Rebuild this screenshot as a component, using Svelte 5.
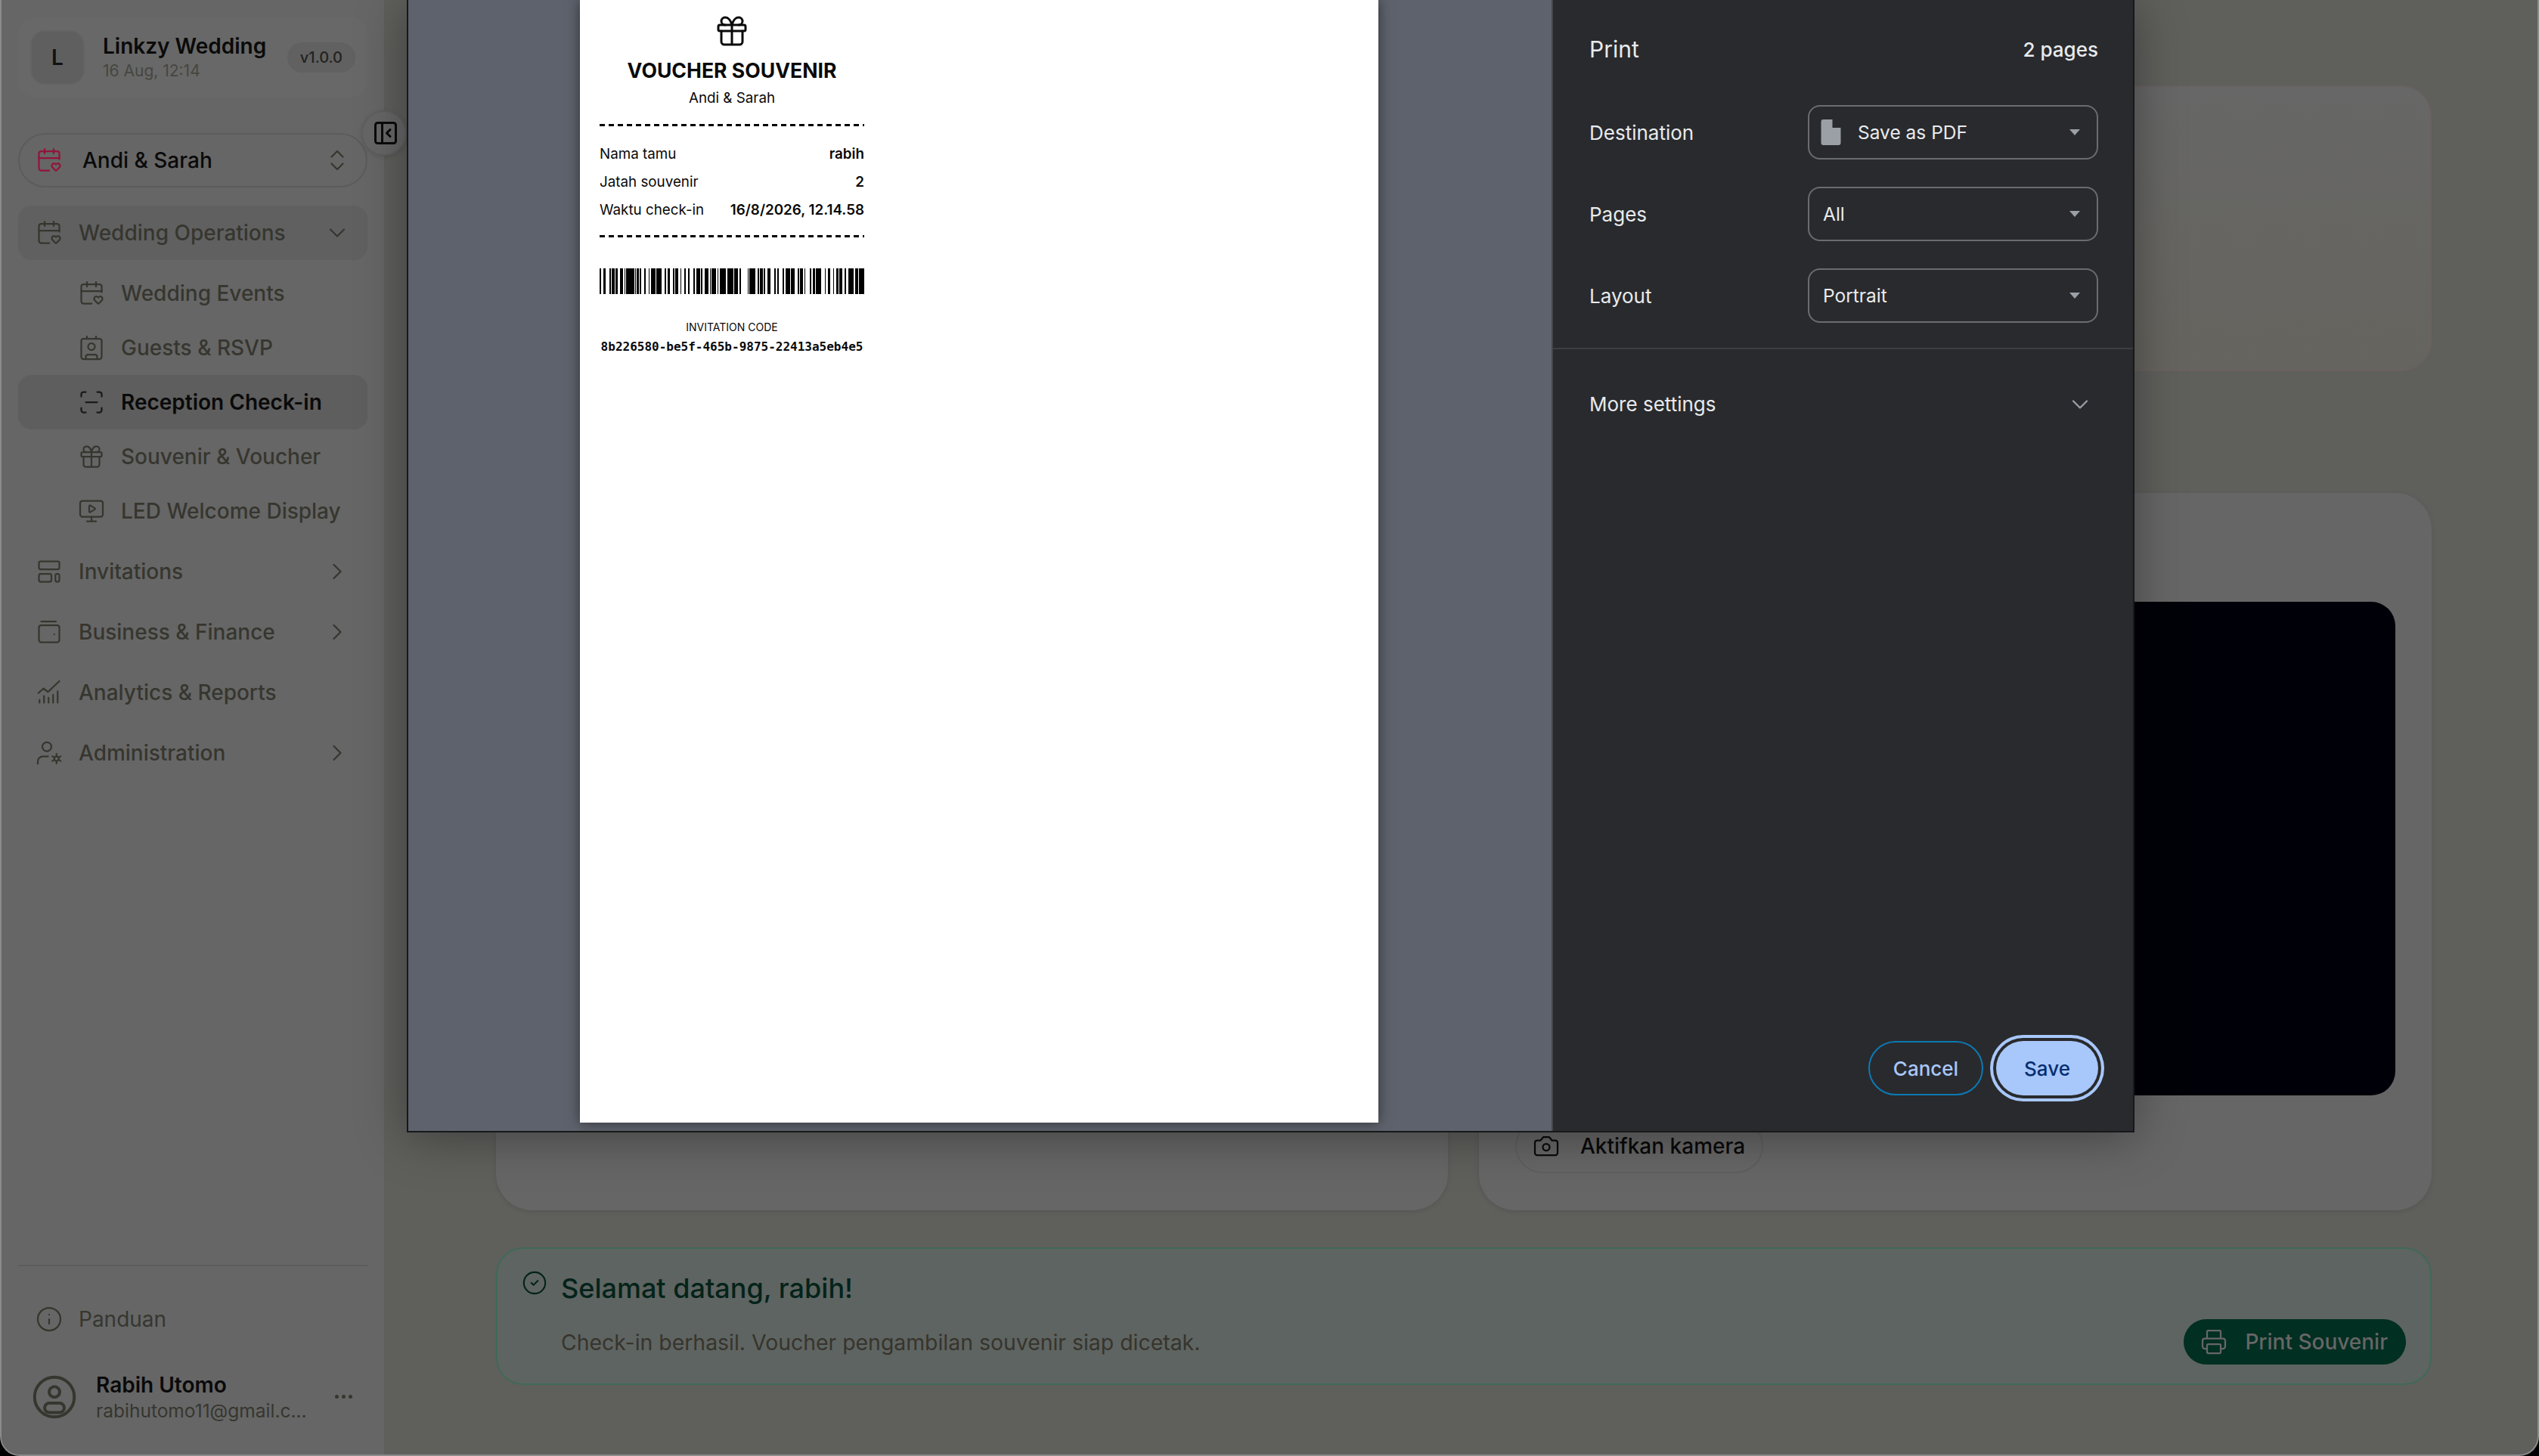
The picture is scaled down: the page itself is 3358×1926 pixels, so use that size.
<script>
  const code = "8b226580-be5f-465b-9875-22413a5eb4e5";

  // bar, gap, bar, gap ... widths read off the printed voucher
  const barWidths = [
    2,2,3,4,2,1,3,1,2,3,3,2,1,1,9,1,1,1,2,1,2,3,2,3,1,2,5,1,6,3,2,1,3,3,2,1,3,3,1,3,2,2,2,4,2,2,4,1,1,3,4,2,1,1,5,1,1,2,7,1,
    7,1,4,2,2,7,1,1,7,2,2,1,3,1,2,2,4,4,2,1,2,4,2,2,5,1,4,3,2,1,3,2,1,5,2,1,3,1,6,4,1,2,3,3,1,3,2,1,3,3,2,2,6,2,3,1,6
  ];

  let cursor = 0;
  const bars = [];
  barWidths.forEach((w, i) => {
    if (i % 2 === 0) bars.push({ x: cursor, w });
    cursor += w;
  });
  const barTotal = cursor;

  const icons = {
    calHeart: '<path d="M12.100 21H5a2 2 0 0 1-2-2V6a2 2 0 0 1 2-2h14a2 2 0 0 1 2 2v5"/><path d="M15 18.300a2 2 0 1 1 3-2.600a2 2 0 1 1 3 2.600l-2.300 2.400a.9.900 0 0 1-1.400 0z"/><path d="M16 2v4M8 2v4M3 10h18"/>',
    contact: '<rect x="3" y="4" width="18" height="18" rx="2"/><path d="M16 2v2M8 2v2M7 22v-2a2 2 0 0 1 2-2h6a2 2 0 0 1 2 2v2"/><circle cx="12" cy="11" r="3"/>',
    scan: '<path d="M3 7V5a2 2 0 0 1 2-2h2M17 3h2a2 2 0 0 1 2 2v2M21 17v2a2 2 0 0 1-2 2h-2M7 21H5a2 2 0 0 1-2-2v-2M7 12h10"/>',
    gift: '<rect x="3" y="8" width="18" height="4" rx="1"/><path d="M12 8v13M19 12v7a2 2 0 0 1-2 2H7a2 2 0 0 1-2-2v-7M7.500 8a2.500 2.500 0 0 1 0-5A4.800 8 0 0 1 12 8a4.800 8 0 0 1 4.500-5 2.500 2.500 0 0 1 0 5"/>',
    monitor: '<rect x="2" y="3" width="20" height="14" rx="2"/><path d="M12 17v4M8 21h8M10 7.700a.7.700 0 0 1 1.100-.6l3.700 2.300a.7.700 0 0 1 0 1.200l-3.700 2.300a.7.700 0 0 1-1.100-.6z"/>',
    layout: '<rect x="3" y="3" width="18" height="7" rx="1.500"/><rect x="3" y="14" width="11" height="7" rx="1.500"/><rect x="17.500" y="14" width="3.500" height="7" rx="1.500"/>',
    wallet: '<rect x="3" y="6" width="18" height="15" rx="2"/><path d="M5 2.800h13M16.500 14h.01"/>',
    chart: '<path d="M2.500 12.500 7 8.500l4 3 10-9.500M3.500 21v-2.500M7.500 21v-6M11.500 21v-4.500M15.500 21v-7M19.500 21v-10"/>',
    userCog: '<circle cx="10" cy="6.500" r="4"/><path d="M2 21.500v-2a4.500 4.500 0 0 1 4.500-4.500H11"/><circle cx="18.500" cy="17" r="2"/><path d="M18.500 12.700v2M18.500 19.300v2M14.800 14.900l1.700 1M20.500 18.100l1.700 1M14.800 19.100l1.700-1M20.500 15.900l1.700-1"/>',
    info: '<circle cx="12" cy="12" r="10"/><path d="M12 16v-4M12 8h.01"/>',
    avatar: '<circle cx="12" cy="12" r="10.500"/><circle cx="12" cy="9.300" r="2.800"/><rect x="6.800" y="15.200" width="10.400" height="5" rx="2.500"/>',
    collapse: '<rect x="3" y="3" width="18" height="18" rx="2"/><path d="M9 3v18M16 15l-3-3 3-3"/>',
    upDown: '<path d="m7 15 5 5 5-5M7 9l5-5 5 5"/>',
    down: '<path d="m6 9 6 6 6-6"/>',
    right: '<path d="m9 6 6 6-6 6"/>',
    check: '<circle cx="12" cy="12" r="10"/><path d="m9 12 2 2 4-4"/>',
    printer: '<path d="M6 18H4a2 2 0 0 1-2-2v-5a2 2 0 0 1 2-2h16a2 2 0 0 1 2 2v5a2 2 0 0 1-2 2h-2M6 9V3a1 1 0 0 1 1-1h10a1 1 0 0 1 1 1v6"/><rect x="6" y="14" width="12" height="8" rx="1"/>',
    camera: '<path d="M14.500 4h-5L7 7H4a2 2 0 0 0-2 2v9a2 2 0 0 0 2 2h16a2 2 0 0 0 2-2V9a2 2 0 0 0-2-2h-3z"/><circle cx="12" cy="13" r="3"/>'
  };

  const subItems = [
    { icon: "calHeart", label: "Wedding Events" },
    { icon: "contact", label: "Guests & RSVP" },
    { icon: "scan", label: "Reception Check-in", active: true },
    { icon: "gift", label: "Souvenir & Voucher" },
    { icon: "monitor", label: "LED Welcome Display" }
  ];

  const mainItems = [
    { icon: "layout", label: "Invitations", more: true },
    { icon: "wallet", label: "Business & Finance", more: true },
    { icon: "chart", label: "Analytics & Reports" },
    { icon: "userCog", label: "Administration", more: true }
  ];

  const receipt = [
    ["Nama tamu", "rabih"],
    ["Jatah souvenir", "2"],
    ["Waktu check-in", "16/8/2026, 12.14.58"]
  ];

  const selects = [
    { label: "Destination", value: "Save as PDF", file: true },
    { label: "Pages", value: "All" },
    { label: "Layout", value: "Portrait" }
  ];
</script>

{#snippet icon(name, cls = "")}
  <svg class="ico {cls}" viewBox="0 0 24 24" fill="none" stroke="currentColor" stroke-width="1.5" stroke-linecap="round" stroke-linejoin="round">{@html icons[name]}</svg>
{/snippet}

<div class="window">
  <aside class="sidebar">
    <div class="brand">
      <div class="logo">L</div>
      <div class="brand-text">
        <div class="brand-name">Linkzy Wedding</div>
        <div class="brand-date">16 Aug, 12:14</div>
      </div>
      <span class="version">v1.0.0</span>
    </div>

    <button class="combo">
      <span class="combo-ico">{@render icon("calHeart")}</span>
      <span class="combo-label">Andi &amp; Sarah</span>
      {@render icon("upDown")}
    </button>

    <nav class="nav">
      <div class="row open">
        {@render icon("calHeart")}
        <span class="grow">Wedding Operations</span>
        {@render icon("down")}
      </div>
      <div class="subs">
        {#each subItems as item}
          <div class="row sub" class:active={item.active}>
            {@render icon(item.icon)}
            <span class="grow">{item.label}</span>
          </div>
        {/each}
      </div>
      {#each mainItems as item}
        <div class="row">
          {@render icon(item.icon)}
          <span class="grow">{item.label}</span>
          {#if item.more}{@render icon("right")}{/if}
        </div>
      {/each}
    </nav>

    <div class="foot">
      <div class="row help">
        {@render icon("info")}
        <span class="grow">Panduan</span>
      </div>
      <div class="user">
        {@render icon("avatar", "avatar")}
        <div class="user-text">
          <div class="user-name">Rabih Utomo</div>
          <div class="user-mail">rabihutomo11@gmail.c...</div>
        </div>
        <span class="dots"><i></i><i></i><i></i></span>
      </div>
    </div>

    <button class="collapse">{@render icon("collapse")}</button>
  </aside>

  <main class="main">
    <section class="card notice"></section>

    <div class="columns">
      <section class="card"></section>
      <section class="card scan-card">
        <div class="video"></div>
        <button class="cam-btn">
          {@render icon("camera")}
          Aktifkan kamera
        </button>
      </section>
    </div>

    <section class="alert">
      {@render icon("check", "alert-ico")}
      <div class="alert-text">
        <div class="alert-title">Selamat datang, rabih!</div>
        <div class="alert-sub">Check-in berhasil. Voucher pengambilan souvenir siap dicetak.</div>
      </div>
      <button class="print-btn">
        {@render icon("printer")}
        Print Souvenir
      </button>
    </section>
  </main>

  <div class="dialog">
    <div class="preview">
      <div class="paper">
        <div class="voucher">
          <div class="v-gift">{@render icon("gift")}</div>
          <div class="v-title">VOUCHER SOUVENIR</div>
          <div class="v-couple">Andi &amp; Sarah</div>
          <div class="dash first"></div>
          {#each receipt as [k, v]}
            <div class="v-row"><span>{k}</span><b>{v}</b></div>
          {/each}
          <div class="dash second"></div>
          <svg class="bars" viewBox="0 0 {barTotal} 10" preserveAspectRatio="none">
            {#each bars as b}
              <rect x={b.x} y="0" width={b.w} height="10" />
            {/each}
          </svg>
          <div class="v-caption">INVITATION CODE</div>
          <div class="v-code">{code}</div>
        </div>
      </div>
    </div>

    <div class="settings">
      <div class="s-head">
        <span class="s-title">Print</span>
        <span class="s-pages">2 pages</span>
      </div>

      {#each selects as s}
        <div class="s-row">
          <span>{s.label}</span>
          <div class="select">
            {#if s.file}
              <svg class="file" viewBox="0 0 26 34"><path d="M3 0h13l10 11v20a3 3 0 0 1-3 3H3a3 3 0 0 1-3-3V3a3 3 0 0 1 3-3z" fill="#9aa0a6"/><path d="M15 0h2l9 10v1H15z" fill="#292a2d"/></svg>
            {/if}
            <span class="grow">{s.value}</span>
            <i class="caret"></i>
          </div>
        </div>
      {/each}

      <div class="s-line"></div>

      <div class="s-more">
        <span>More settings</span>
        {@render icon("down", "more-chev")}
      </div>

      <div class="s-actions">
        <button class="cancel">Cancel</button>
        <button class="save">Save</button>
      </div>
    </div>
  </div>
</div>

<style>
  :global(body) {
    margin: 0;
    background: #000;
  }

  .window {
    position: relative;
    display: flex;
    width: 3358px;
    height: 1926px;
    box-sizing: border-box;
    overflow: hidden;
    border: 2px solid #8b8b8b;
    border-top: 0;
    border-radius: 0 0 26px 26px;
    background: #5f5f5c;
    font-family: Inter, "Liberation Sans", sans-serif;
    color: #36362f;
  }

  button {
    font-family: inherit;
    padding: 0;
    border: 0;
    background: none;
    color: inherit;
  }

  .ico {
    display: block;
    flex: none;
    width: 36px;
    height: 36px;
  }

  .grow {
    flex: 1;
    min-width: 0;
  }

  /* sidebar */
  .sidebar {
    position: relative;
    flex: none;
    display: flex;
    flex-direction: column;
    width: 508px;
    box-sizing: border-box;
    padding: 24px 22px 0 22px;
    background: #666;
    border-right: 2px solid #5e5e5c;
    font-size: 28px;
    font-weight: 500;
  }

  .brand {
    display: flex;
    align-items: center;
    gap: 24px;
    height: 104px;
    box-sizing: border-box;
    padding: 0 16px;
    border-radius: 20px;
    background: #686868;
  }

  .logo {
    display: flex;
    align-items: center;
    justify-content: center;
    flex: none;
    width: 72px;
    height: 72px;
    box-sizing: border-box;
    border-radius: 20px;
    background: #5f5f5f;
    border: 2px solid #636363;
    font-size: 28px;
    font-weight: 600;
    color: #111;
  }

  .brand-text {
    flex: 1;
    min-width: 0;
    margin-top: -2px;
  }

  .brand-name {
    color: #0a0a0a;
    font-size: 28px;
    font-weight: 600;
    line-height: 34px;
    white-space: nowrap;
  }

  .brand-date {
    margin-top: 3px;
    font-size: 21px;
    line-height: 26px;
    font-weight: 400;
    color: #464640;
  }

  .version {
    flex: none;
    margin-left: -14px;
    padding: 0 17px;
    line-height: 40px;
    border-radius: 20px;
    background: #616161;
    font-size: 20px;
    color: #222220;
  }

  .combo {
    display: flex;
    align-items: center;
    height: 72px;
    margin-top: 48px;
    box-sizing: border-box;
    padding: 0 20px 0 21px;
    border: 2px solid #5c5c5c;
    border-radius: 36px;
    font-size: 28px;
    font-weight: 500;
    color: #0a0a0a;
    text-align: left;
  }

  .combo-ico {
    color: #93143a;
    margin-right: 26px;
  }

  .combo-label {
    flex: 1;
  }

  .combo > :global(.ico) {
    color: #36362f;
  }

  .nav {
    display: flex;
    flex-direction: column;
    gap: 8px;
    margin-top: 24px;
  }

  .subs {
    display: flex;
    flex-direction: column;
  }

  .row {
    display: flex;
    align-items: center;
    gap: 21px;
    height: 72px;
    padding: 0 22px 0 23px;
    border-radius: 18px;
    white-space: nowrap;
  }

  .row.open {
    background: #606060;
  }

  .row.sub {
    padding-left: 79px;
  }

  .row.active {
    background: #5e5e5e;
    color: #0a0a0a;
    font-weight: 600;
  }

  .row.active :global(.ico) {
    color: #1a1a18;
  }

  .foot {
    margin-top: auto;
    padding-bottom: 41px;
    border-top: 2px solid #5c5c5c;
  }

  .help {
    margin-top: 34px;
    font-weight: 400;
  }

  .user {
    display: flex;
    align-items: center;
    gap: 25px;
    margin-top: 31px;
    padding: 0 20px 0 18px;
  }

  .user :global(.avatar) {
    width: 60px;
    height: 60px;
    stroke-width: 1.6;
  }

  .user-text {
    flex: 1;
    min-width: 0;
    margin-top: 2px;
    white-space: nowrap;
  }

  .user-name {
    color: #0a0a0a;
    font-weight: 600;
    font-size: 28px;
    line-height: 36px;
  }

  .user-mail {
    font-size: 24.500px;
    line-height: 33px;
    font-weight: 400;
  }

  .dots {
    display: flex;
    gap: 4px;
  }

  .dots i {
    width: 5px;
    height: 5px;
    border-radius: 50%;
    background: #36362f;
  }

  .collapse {
    position: absolute;
    left: 476px;
    top: 146px;
    width: 60px;
    height: 60px;
    display: flex;
    align-items: center;
    justify-content: center;
    padding-left: 4px;
    border-radius: 50%;
    background: #666;
    border: 2px solid #5f5f5f;
    box-sizing: border-box;
    color: #0a0a0a;
    box-shadow: 0 2px 6px rgba(0, 0, 0, 0.12);
  }

  .collapse :global(.ico) {
    stroke-width: 2;
  }

  /* page under the dialog */
  .main {
    flex: 1;
    min-width: 0;
    padding: 113px 140px 0 146px;
  }

  .card {
    box-sizing: border-box;
    border-radius: 48px;
    background: #666;
    box-shadow: 0 2px 6px rgba(0, 0, 0, 0.1);
  }

  .notice {
    height: 378px;
    border-radius: 40px;
    background: linear-gradient(180deg, #676767, #65645e);
    border: 2px solid #6a6160;
    box-shadow: none;
  }

  .columns {
    display: grid;
    grid-template-columns: 1259px 1260px;
    gap: 41px;
    margin-top: 161px;
    height: 949px;
  }

  .scan-card {
    padding: 144px 48px 0;
  }

  .video {
    height: 653px;
    border-radius: 32px;
    background: #000008;
  }

  .cam-btn {
    display: flex;
    align-items: center;
    gap: 27px;
    width: 328px;
    height: 72px;
    margin-top: 31px;
    box-sizing: border-box;
    padding-left: 21px;
    border: 2px solid #5f5f5f;
    border-radius: 36px;
    font-size: 28px;
    font-weight: 500;
    color: #0a0a0a;
    white-space: nowrap;
  }

  .alert {
    display: flex;
    height: 182px;
    margin-top: 49px;
    box-sizing: border-box;
    padding: 28px 32px 25px 32px;
    border: 2px solid #3f6a58;
    border-radius: 36px;
    background: #5e6461;
  }

  .alert :global(.alert-ico) {
    width: 34px;
    height: 34px;
    color: #04231a;
  }

  .alert-text {
    flex: 1;
    margin-left: 18px;
  }

  .alert-title {
    font-size: 36px;
    font-weight: 500;
    line-height: 48px;
    color: #04231a;
  }

  .alert-sub {
    margin-top: 28px;
    font-size: 28.400px;
    line-height: 40px;
    color: #37342d;
  }

  .print-btn {
    display: flex;
    align-items: center;
    align-self: flex-end;
    gap: 23px;
    height: 60px;
    padding: 0 24px 0 22px;
    border-radius: 30px;
    background: #012f22;
    color: #666;
    font-size: 28px;
    font-weight: 500;
    white-space: nowrap;
  }

  /* print dialog */
  .dialog {
    position: absolute;
    left: 536px;
    top: 0;
    width: 2285px;
    height: 1498px;
    display: flex;
    box-sizing: border-box;
    border: 2px solid #17181a;
    border-top: 0;
    box-shadow: 0 6px 60px rgba(0, 0, 0, 0.35);
  }

  .preview {
    flex: 1;
    min-width: 0;
    overflow: hidden;
    padding: 0 0 11px 227px;
    background: #5e626c;
  }

  .paper {
    width: 1056px;
    height: 100%;
    box-sizing: border-box;
    background: #fff;
    box-shadow: 0 0 16px rgba(0, 0, 0, 0.5);
    color: #0a0a0a;
  }

  .voucher {
    width: 350px;
    margin-left: 26px;
    padding-top: 17px;
    text-align: center;
    font-size: 18.800px;
    font-weight: 400;
  }

  .v-gift {
    display: flex;
    justify-content: center;
  }

  .v-gift :global(.ico) {
    width: 48px;
    height: 48px;
  }

  .v-title {
    margin-top: 11px;
    font-size: 26.600px;
    font-weight: 700;
    line-height: 34px;
    white-space: nowrap;
  }

  .v-couple {
    margin-top: 7px;
    line-height: 26px;
  }

  .dash {
    height: 3px;
    background: repeating-linear-gradient(90deg, #000 0 7px, transparent 7px 12px);
  }

  .dash.first {
    margin: 21px 0 18px;
  }

  .dash.second {
    margin: 15px 0 41px;
  }

  .v-row {
    display: flex;
    justify-content: space-between;
    height: 37px;
    line-height: 37px;
    white-space: nowrap;
  }

  .v-row b {
    font-weight: 600;
  }

  .bars {
    display: block;
    width: 350px;
    height: 34px;
    shape-rendering: crispEdges;
  }

  .bars rect {
    fill: #000;
  }

  .v-caption {
    margin-top: 34px;
    font-size: 14px;
    line-height: 20px;
  }

  .v-code {
    margin-top: 5px;
    font-family: "DejaVu Sans Mono", "Liberation Mono", monospace;
    font-size: 16px;
    font-weight: 700;
    line-height: 22px;
    white-space: nowrap;
  }

  .settings {
    flex: none;
    position: relative;
    width: 769px;
    box-sizing: border-box;
    border-left: 2px solid #45474b;
    background: #292a2d;
    color: #e8eaed;
    font-size: 26px;
  }

  .s-head {
    display: flex;
    align-items: center;
    justify-content: space-between;
    height: 130px;
    padding: 0 46px 0 48px;
  }

  .s-title {
    font-size: 30px;
  }

  .s-pages {
    font-weight: 500;
  }

  .s-row {
    display: flex;
    align-items: center;
    justify-content: space-between;
    padding: 0 46px 0 48px;
    margin-top: 36px;
  }

  .s-head + .s-row {
    margin-top: 9px;
  }

  .select {
    display: flex;
    align-items: center;
    width: 384px;
    height: 72px;
    box-sizing: border-box;
    padding: 0 22px 0 18px;
    border: 2px solid #6b6c6f;
    border-radius: 16px;
    font-size: 24.500px;
  }

  .file {
    flex: none;
    width: 27px;
    height: 34px;
    margin: 0 22px 0 -3px;
  }

  .caret {
    width: 0;
    height: 0;
    border: 7px solid transparent;
    border-top: 8px solid #9aa0a6;
    border-bottom: 0;
  }

  .s-line {
    height: 2px;
    margin-top: 33px;
    background: #3d3e42;
  }

  .s-more {
    display: flex;
    align-items: center;
    justify-content: space-between;
    padding: 0 52px 0 48px;
    margin-top: 55px;
    line-height: 36px;
  }

  .s-more :global(.more-chev) {
    color: #9aa0a6;
  }

  .s-actions {
    position: absolute;
    right: 46px;
    bottom: 47px;
    display: flex;
    gap: 17px;
  }

  .s-actions button {
    height: 72px;
    box-sizing: border-box;
    border-radius: 36px;
    font-size: 26px;
    font-weight: 500;
  }

  .cancel {
    width: 152px;
    border: 2px solid #0b7ab5;
    color: #a8c7fa;
  }

  .save {
    width: 135px;
    background: #a8c7fa;
    color: #062e6f;
    box-shadow: 0 0 0 4px #292a2d, 0 0 0 8px #a8c7fa;
  }
</style>
